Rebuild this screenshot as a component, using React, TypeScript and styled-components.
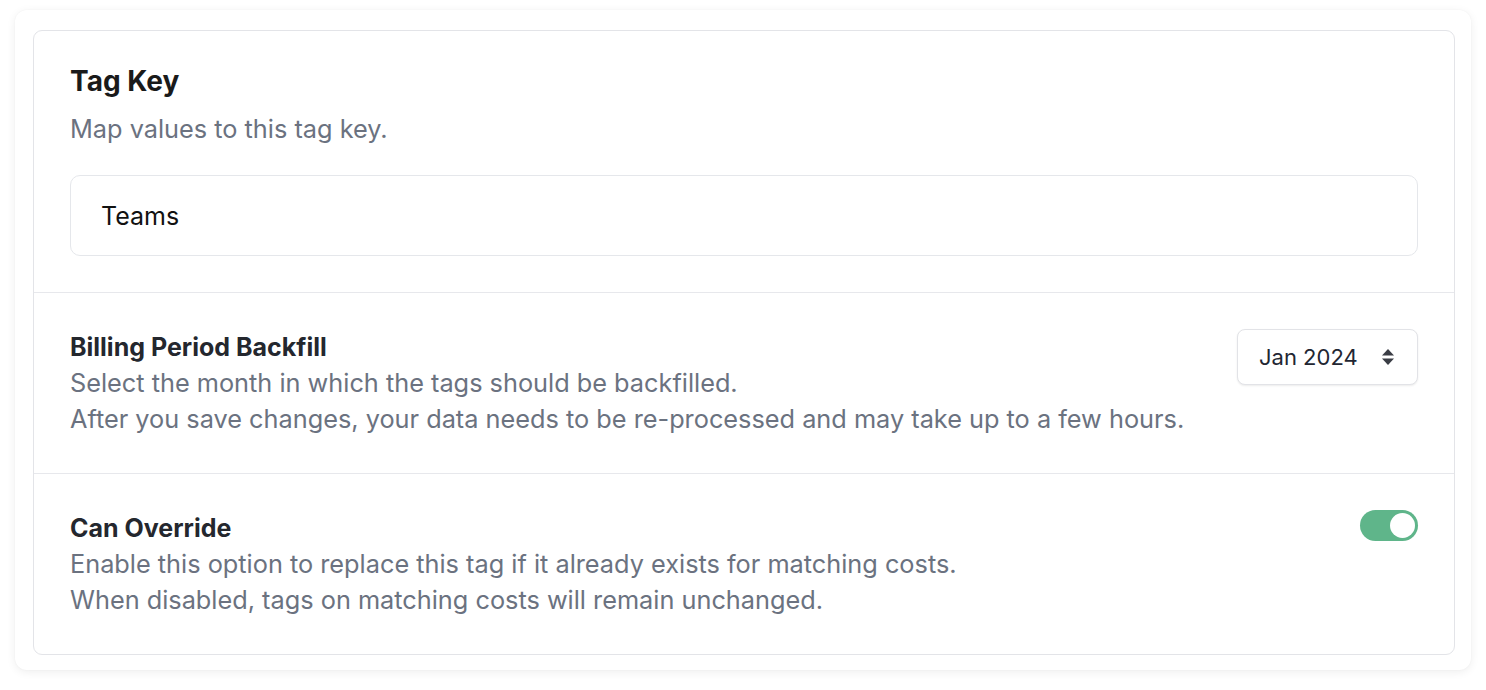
import styled, { createGlobalStyle } from 'styled-components';

const GlobalStyle = createGlobalStyle`
  html, body {
    margin: 0;
    padding: 0;
    background: #ffffff;
    font-family: Inter, "Noto Sans", sans-serif;
  }
  * { box-sizing: border-box; }
`;

const Page = styled.div`
  padding: 10px 15px 20px;
`;

const OuterCard = styled.div`
  background: #ffffff;
  border-radius: 12px;
  box-shadow: 0 2px 10px rgba(0, 0, 0, 0.07), 0 0 2px rgba(0, 0, 0, 0.04);
  padding: 20px 16px 15px 18px;
`;

const InnerCard = styled.div`
  border: 1px solid #e3e4e8;
  border-radius: 9px;
  background: #ffffff;
`;

const Section = styled.section<{ $last?: boolean }>`
  padding: 36px 36px;
  border-bottom: ${({ $last }) => ($last ? 'none' : '1px solid #e7e8ec')};
  display: flex;
  align-items: flex-start;
  justify-content: space-between;
  gap: 24px;
`;

const Stack = styled.div`
  display: flex;
  flex-direction: column;
  flex: 1;
`;

const BigTitle = styled.h2`
  margin: 0;
  font-size: 28px;
  line-height: 28px;
  font-weight: 700;
  color: #1a1a1a;
`;

const Title = styled.h3`
  margin: 0;
  font-size: 25px;
  line-height: 36px;
  font-weight: 700;
  color: #24272e;
`;

const Desc = styled.p<{ $spaced?: boolean }>`
  margin: ${({ $spaced }) => ($spaced ? '16px 0 0' : '0')};
  font-size: 25.3px;
  line-height: 36px;
  color: #6b7280;
`;

const TextInput = styled.div`
  margin-top: 28px;
  height: 81px;
  border: 1px solid #e5e7eb;
  border-radius: 10px;
  display: flex;
  align-items: center;
  padding: 0 30px;
  font-size: 25px;
  color: #111111;
`;

const SelectButton = styled.button`
  flex: none;
  width: 181px;
  height: 56px;
  border: 1px solid #e2e3e7;
  border-radius: 8px;
  background: #ffffff;
  box-shadow: 0 1px 2px rgba(0, 0, 0, 0.08);
  display: flex;
  align-items: center;
  justify-content: space-between;
  padding: 0 22px 0 21px;
  font-family: inherit;
  font-size: 22px;
  color: #222632;
`;

const Toggle = styled.div<{ $on: boolean }>`
  flex: none;
  width: 58px;
  height: 31px;
  border-radius: 16px;
  background: ${({ $on }) => ($on ? '#5fb58a' : '#d1d5db')};
  display: flex;
  align-items: center;
  justify-content: ${({ $on }) => ($on ? 'flex-end' : 'flex-start')};
  padding: 0 3px;
`;

const Knob = styled.span`
  width: 25px;
  height: 25px;
  border-radius: 50%;
  background: #ffffff;
`;

const Chevrons = () => (
  <svg width="14" height="18" viewBox="0 0 14 18" fill="#3a3d45">
    <path d="M7 1 L13 7.5 H1 Z" />
    <path d="M7 17 L13 10.5 H1 Z" />
  </svg>
);

export default function App() {
  return (
    <>
      <GlobalStyle />
      <Page>
        <OuterCard>
          <InnerCard>
            <Section>
              <Stack>
                <BigTitle>Tag Key</BigTitle>
                <Desc $spaced>Map values to this tag key.</Desc>
                <TextInput>Teams</TextInput>
              </Stack>
            </Section>
            <Section>
              <Stack>
                <Title>Billing Period Backfill</Title>
                <Desc>Select the month in which the tags should be backfilled.</Desc>
                <Desc>After you save changes, your data needs to be re-processed and may take up to a few hours.</Desc>
              </Stack>
              <SelectButton>
                Jan 2024
                <Chevrons />
              </SelectButton>
            </Section>
            <Section $last>
              <Stack>
                <Title>Can Override</Title>
                <Desc>Enable this option to replace this tag if it already exists for matching costs.</Desc>
                <Desc>When disabled, tags on matching costs will remain unchanged.</Desc>
              </Stack>
              <Toggle $on>
                <Knob />
              </Toggle>
            </Section>
          </InnerCard>
        </OuterCard>
      </Page>
    </>
  );
}
